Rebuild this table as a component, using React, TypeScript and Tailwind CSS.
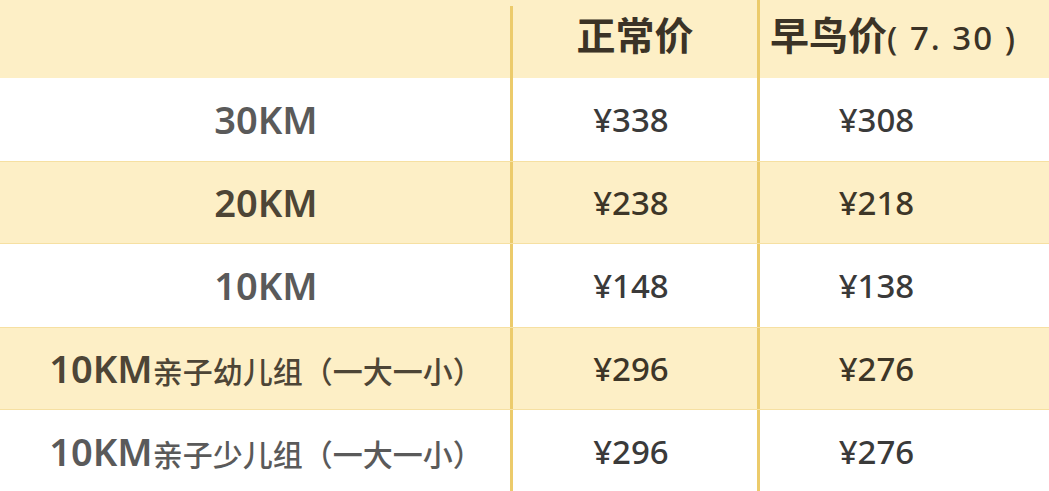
const rows = [
  { name: "30KM", normal: "¥338", early: "¥308" },
  { name: "20KM", normal: "¥238", early: "¥218" },
  { name: "10KM", normal: "¥148", early: "¥138" },
  { name: "10KM", sub: "亲子幼儿组（一大一小）", normal: "¥296", early: "¥276" },
  { name: "10KM", sub: "亲子少儿组（一大一小）", normal: "¥296", early: "¥276" },
];

const font = { fontFamily: '"Noto Sans", "Noto Sans CJK SC", sans-serif' };

export default function App() {
  return (
    <div className="w-[1049px] h-[491px] overflow-hidden bg-white" style={font}>
      <div className="grid grid-cols-[510px_247px_1fr] h-[78px] bg-[#fdefc6]">
        <div />
        <div className="flex items-center justify-center mt-[6px] pb-[16px] border-l-[3px] border-[#eccb6b] text-[39px] font-bold text-[#3b3326]">
          正常价
        </div>
        <div className="flex items-center justify-start pl-[10px] pb-[10px] border-l-[3px] border-[#eccb6b] text-[#3b3326]">
          <span className="text-[39px] font-bold">早鸟价</span>
          <span className="text-[33px] font-medium tracking-[2px] mt-[4px]">( 7. 30 )</span>
        </div>
      </div>
      {rows.map((r, i) => {
        const yellow = i % 2 === 1;
        return (
          <div
            key={i}
            className={`grid grid-cols-[510px_247px_1fr] h-[83px] ${
              yellow ? "bg-[#fdefc6] border-y border-[#f6e0a2]" : "bg-white"
            }`}
          >
            <div
              className={`flex items-center justify-center pl-[22px] ${
                yellow ? "text-[#4d4536]" : "text-[#5a5a5a]"
              }`}
            >
              <span className="text-[38px] font-semibold">{r.name}</span>
              {r.sub && <span className="text-[30px] font-medium mt-[5px]">{r.sub}</span>}
            </div>
            <div
              className={`flex items-center justify-center border-l-[3px] border-[#eccb6b] pr-[8px] text-[33px] font-medium ${
                yellow ? "text-[#3d3628]" : "text-[#3a3a3a]"
              }`}
            >
              {r.normal}
            </div>
            <div
              className={`flex items-center justify-center border-l-[3px] border-[#eccb6b] pr-[56px] text-[33px] font-medium ${
                yellow ? "text-[#3d3628]" : "text-[#3a3a3a]"
              }`}
            >
              {r.early}
            </div>
          </div>
        );
      })}
    </div>
  );
}
